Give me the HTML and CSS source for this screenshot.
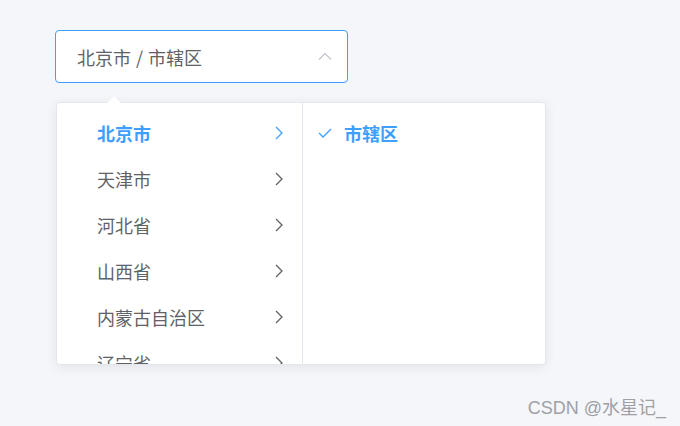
FILE: index.html
```html
<!DOCTYPE html>
<html>
<head>
<meta charset="utf-8">
<link rel="stylesheet" href="styles.css">
</head>
<body>
<div class="page">
  <div class="cascader">
    <div class="input">
      <span class="value">北京市 / 市辖区</span>
      <svg class="caret" width="14" height="8" viewBox="0 0 14 8"><path d="M1 7.5 L7 1.5 L13 7.5" fill="none" stroke="#c0c4cc" stroke-width="1.2"/></svg>
    </div>
    <div class="panel">
      <div class="arrow"></div>
      <div class="menus">
        <ul class="menu left">
          <li class="item active"><span>北京市</span><svg class="chev" width="8" height="14" viewBox="0 0 8 14"><path d="M1 1 L7 7 L1 13" fill="none" stroke="currentColor" stroke-width="1.3"/></svg></li>
          <li class="item"><span>天津市</span><svg class="chev" width="8" height="14" viewBox="0 0 8 14"><path d="M1 1 L7 7 L1 13" fill="none" stroke="currentColor" stroke-width="1.3"/></svg></li>
          <li class="item"><span>河北省</span><svg class="chev" width="8" height="14" viewBox="0 0 8 14"><path d="M1 1 L7 7 L1 13" fill="none" stroke="currentColor" stroke-width="1.3"/></svg></li>
          <li class="item"><span>山西省</span><svg class="chev" width="8" height="14" viewBox="0 0 8 14"><path d="M1 1 L7 7 L1 13" fill="none" stroke="currentColor" stroke-width="1.3"/></svg></li>
          <li class="item"><span>内蒙古自治区</span><svg class="chev" width="8" height="14" viewBox="0 0 8 14"><path d="M1 1 L7 7 L1 13" fill="none" stroke="currentColor" stroke-width="1.3"/></svg></li>
          <li class="item"><span>辽宁省</span><svg class="chev" width="8" height="14" viewBox="0 0 8 14"><path d="M1 1 L7 7 L1 13" fill="none" stroke="currentColor" stroke-width="1.3"/></svg></li>
        </ul>
        <ul class="menu right">
          <li class="item active"><svg class="check" width="14" height="10" viewBox="0 0 14 10"><path d="M1 5 L5 9 L13 1" fill="none" stroke="#409eff" stroke-width="1.3"/></svg><span>市辖区</span></li>
        </ul>
      </div>
    </div>
  </div>
  <div class="watermark">CSDN @水星记_</div>
</div>
</body>
</html>
```
FILE: styles.css
```css
* { box-sizing: border-box; }
html, body {
  margin: 0;
  padding: 0;
  background: #f5f6fa;
  font-family: "Noto Sans CJK SC", "Noto Sans", sans-serif;
}
.page {
  position: relative;
  width: 680px;
  height: 426px;
  padding: 30px 0 0 55px;
  overflow: hidden;
}
.cascader {
  width: 293px;
}
.input {
  height: 53px;
  border: 1px solid #409eff;
  border-radius: 4px;
  background: #fff;
  display: flex;
  align-items: center;
  padding: 0 15px 0 21px;
  justify-content: space-between;
}
.value {
  font-size: 18px;
  color: #606266;
  word-spacing: 1px;
}
.caret { margin-top: -2px; }
.panel {
  position: relative;
  margin-top: 19px;
  margin-left: 1px;
  width: 490px;
  height: 263px;
  background: #fff;
  border: 1px solid #e4e7ed;
  border-radius: 4px;
  box-shadow: 0 2px 12px rgba(0,0,0,0.08);
}
.arrow {
  position: absolute;
  top: -7px;
  left: 50px;
  width: 0;
  height: 0;
  border-left: 7px solid transparent;
  border-right: 7px solid transparent;
  border-bottom: 7px solid #fff;
}
.menus {
  display: flex;
  height: 100%;
  overflow: hidden;
  border-radius: 4px;
}
.menu {
  list-style: none;
  margin: 0;
  padding: 7px 0 0;
}
.menu.left {
  width: 246px;
  border-right: 1px solid #e4e7ed;
}
.menu.right {
  flex: 1;
}
.item {
  height: 46px;
  display: flex;
  align-items: center;
  font-size: 18px;
  color: #606266;
}
.left .item {
  padding: 0 19px 0 40px;
  justify-content: space-between;
}
.item.active {
  color: #409eff;
  font-weight: 700;
}
.chev { color: #606266; }
.item.active .chev { color: #409eff; }
.right .item {
  padding-left: 15px;
}
.check { margin-right: 12px; }
.watermark {
  position: absolute;
  right: 14px;
  bottom: 7px;
  font-family: "Liberation Sans", "Noto Sans CJK SC", sans-serif;
  font-size: 18px;
  color: #a0a0a4;
}
```
